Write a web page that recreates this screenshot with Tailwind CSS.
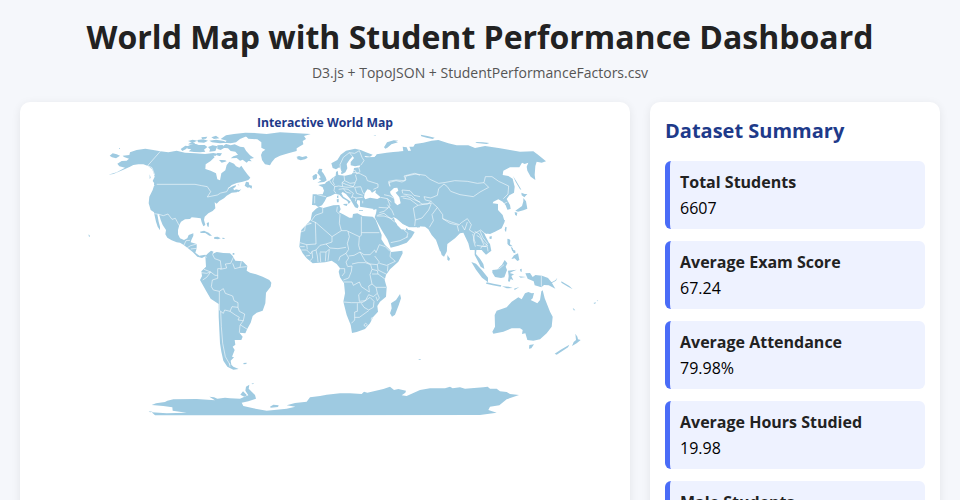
<!DOCTYPE html>
<html lang="en">
<head>
<meta charset="utf-8">
<meta name="viewport" content="width=device-width, initial-scale=1">
<title>World Map with Student Performance Dashboard</title>
<script src="https://cdn.jsdelivr.net/npm/@tailwindcss/browser@4"></script>
</head>
<body class="bg-[#f5f7fb] p-5 font-['Open_Sans',sans-serif] text-black">
<header class="mb-5 text-center">
  <h1 class="text-[32px] leading-[34px] font-bold text-[#222]">World Map with Student Performance Dashboard</h1>
  <p class="mt-[10px] text-sm leading-[18px] text-[#555]">D3.js + TopoJSON + StudentPerformanceFactors.csv</p>
</header>
<main class="flex items-stretch gap-5">
  <section class="min-w-0 flex-1 rounded-[10px] bg-white p-[15px] shadow-[0_2px_10px_rgba(0,0,0,0.08)]">
    <svg class="block w-full overflow-visible" viewBox="0 0 950 688" role="img" aria-label="Interactive World Map">
      <text x="475" y="17" text-anchor="middle" class="fill-[#1e3a8a] text-[20px] font-bold">Interactive World Map</text>
      <g transform="scale(1.638) translate(-35 -117)">
      <g fill="#9ecae1">
        <!-- North America -->
        <g transform="translate(80 125) scale(.33333)">
          <path d="M196 71L215 74 241 79 265 82 290 77 315 83 345 85 375 87 400 84 412 86 405 95 392 108 377 118 376 132 392 137 408 145 412 163 420 166 424 145 436 136 440 120 448 110 462 116 468 124 478 128 484 122 492 134 502 148 511 158 505 165 488 170 470 174 455 180 442 192 458 184 468 180 465 192 480 196 470 202 455 203 440 212 432 220 418 228 410 236 404 232 406 250 398 258 385 265 374 275 372 285 376 300 370 304 365 292 362 280 350 278 335 277 330 282 315 283 303 290 298 300 294 315 294 328 300 340 312 345 322 340 326 330 340 325 340 332 334 345 332 352 350 357 350 370 346 383 358 392 376 389 382 396 376 394 366 399 352 395 338 381 324 370 310 359 300 353 290 352 275 346 262 338 256 328 258 315 248 300 242 285 237 268 232 268 236 290 240 305 240 316 233 305 228 290 223 268 222 262 212 255 206 235 208 215 218 195 222 182 227 180 218 168 224 155 220 142 216 132 204 123 190 118 175 118 160 120 150 125 130 134 100 147 85 149 110 142 128 132 135 128 118 124 112 116 125 108 140 107 147 101 132 96 128 92 148 90 150 82 170 75Z"/>
          <path d="M89 92L98 85 110 88 120 92 108 100 96 97ZM117 69h3v2h-3ZM222 173l10 8-2 6-8-7ZM209 148l3 10-3 4ZM494 182l4-12 8 2 2 8 8 2-1 9-7-4-5 1ZM360 320l12-3 14 6 10 9-8 0-12-8-14 0ZM403 336l10-1 9 5-8 3-12-2ZM427 338l7 1-1 3-6-1ZM380 294l7-2-1 14-4-2ZM26 328l4 5-2 3-2-3ZM473 178l9 4-8-1ZM470 197l14-4-8 8Z"/>
        </g>
        <!-- Greenland, Arctic islands and Iceland -->
        <g transform="translate(180 125) scale(.33333)">
          <path d="M195 31L220 24 260 27 300 22 340 24 392 27 372 33 378 42 368 48 370 58 350 70 350 78 325 85 300 92 285 100 275 112 270 121 255 118 246 105 243 90 247 80 256 74 244 68 244 52 232 43 205 41Z"/>
          <path d="M130 62l8-5 14 4 12-3 16 7 12 2 6 10 12 14 12 8-13 3 6 7-10-1-5 5-12-9-8 3-10-8-18 1 8-6 14-5-8-9-14-2-8-8-14-2ZM122 42l16-11 24-4 34-4 32 1-12 8-20 3-16 7-12 10-16 3-18-2 6-6ZM24 63l18-8 14 5 18 0 8 6-10 8 4 6-16 2-18-1-16-2 8-6-12-2ZM2 72l14-10 11 2-10 9-10 5ZM84 66l14-5 14 3-6 14-18 2 2-7ZM112 84l14 1-6 9-12-4ZM88 47l20-3 24 4 8 5-20 2-24-3ZM52 45l18-2 14 4-12 6-18-1ZM24 48l14-4 14 3-14 6ZM94 37l14-5 10 8-16 2ZM112 61l16-1 4 9-10 6-10-3ZM117 105l14-4 9 8-15 4ZM24 58l10-6 12 2-6 6ZM64 37l18-2-4 6-12 1Z"/>
          <path d="M349 96l8-3 10 3 12-3 4 5-8 5-13 3-11-4 2-3ZM398 154l8-7 6 4-4 11-9 2Z"/>
        </g>
        <!-- South America -->
        <g transform="translate(180 240) scale(.33333)">
          <path d="M76 48L84 40 93 32 101 35 98 41 110 36 130 39 150 40 158 48 166 62 188 64 202 78 200 92 210 98 228 103 248 110 268 120 274 128 272 140 258 158 256 190 248 212 230 218 218 228 212 248 202 266 196 280 178 278 188 290 184 300 164 300 166 314 158 320 164 330 156 350 162 352 152 362 154 374 160 380 176 387 160 389 142 380 130 362 124 335 120 310 118 270 116 230 116 192 92 176 78 152 60 120 66 108 64 94 78 80Z"/>
          <path d="M190 369l10-1-1 4-8 1ZM158 39h5v5h-5Z"/>
        </g>
        <!-- Europe -->
        <g transform="translate(290 140) scale(.33333)">
          <path d="M124 70L142 60 152 44 168 32 195 26 212 30 228 37 248 44 240 50 225 48 222 53 235 60 248 58 256 48 270 46 285 44 310 38 340 34 390 30V205L262 205 262 197 250 201 235 200 220 195 216 184 224 179 212 182 202 180 200 188 206 198 203 205 195 202 188 190 180 176 168 162 158 156 154 160 160 170 174 179 182 185 176 192 172 183 158 175 148 164 135 161 122 168 110 172 104 184 96 196 84 201 77 196 66 195 67 180 68 163 98 163 102 152 98 142 85 135 105 131 108 127 120 120 128 113 137 107 138 96 143 92 145 105 165 107 185 103 190 95 192 84 208 82 212 76 195 79 182 76 182 66 192 54 188 49 178 60 170 72 172 85 166 97 158 101 153 91 148 82 138 88 128 84Z"/>
          <path d="M87 86l10 1-2 7 6 7 6 11 3 9-8 5-20 2 12-7-8-4 6-5-5-8-5-5ZM68 108l12-6 1 13-12 5ZM141 168l4-2v9l-4-2ZM140 178l6-1v10h-5ZM160 192l13-1-3 7-9-3ZM207 211h12v2h-12ZM248 208l9-2-5 4ZM282 22l14-14 22-3 6 2-20 6-12 10-6 3ZM154 96l4 0 0 6-5-1Z"/>
        </g>
        <!-- Africa and Arabia -->
        <g transform="translate(290 200) scale(.33333)">
          <path d="M66 38L78 26 88 20 100 24 130 16 148 15 152 28 147 37 162 44 178 53 187 53 189 42 202 40 218 48 248 50 256 58 262 72 268 88 275 105 274 118 285 135 298 148 304 156 337 152 338 160 325 185 300 208 288 225 284 240 290 262 288 290 270 305 262 318 264 335 250 350 240 370 225 387 200 396 186 399 182 375 170 345 160 305 165 280 162 250 150 232 146 215 150 205 140 192 125 182 105 187 85 188 68 190 50 175 38 160 28 140 30 120 32 100 34 90 48 75 62 60Z"/>
          <path d="M262 18L258 40 254 52 263 68 275 90 292 118 302 143 325 137 350 128 365 112 374 96 360 90 350 82 347 90 335 88 325 76 315 65 312 52 325 62 338 76 355 83 372 84 390 82V0H262ZM330 282L333 295 326 316 315 344 306 350 300 340 305 325 303 310 318 300Z"/>
        </g>
        <!-- Asia -->
        <g transform="translate(360 130) scale(.33333)">
          <path d="M0 76L20 82 45 81 50 73 80 68 100 66 130 64 128 50 140 52 150 76 158 74 152 60 148 50 160 50 165 42 190 38 215 32 235 30 265 40 290 46 325 46 345 54 375 48 420 55 450 60 480 65 520 64 535 75 558 94 545 98 530 95 526 108 524 135 526 150 512 140 502 122 500 110 505 98 494 102 486 98 478 112 450 112 430 122 428 135 445 138 458 146 464 170 462 188 448 196 440 207 450 225 452 237 442 239 437 226 428 215 415 208 400 215 398 220 414 222 414 240 428 255 434 275 425 295 405 305 390 312 372 310 385 335 380 360 330 360 325 340 310 308 300 310 285 325 262 342 260 364 240 364 228 330 215 315 205 298 195 290 165 288 145 290 128 282 112 268 102 262 60 240 0 230Z"/>
          <path d="M73 50l8-13 20-6 14 1-18 7-12 9-6 6ZM182 14l20 4 22 5-6 4-18-4-16-4ZM346 36l22 1 20 2-8 3-30-3ZM40 16l8-1-2 2ZM459 138l10 16 15 25-4-1-14-24ZM484 188l10 4 8 0-9 10-8-6ZM490 204l8 10 4 22-12 5-16 4-8-3 20-14 4-14ZM464 246l8 2-2 10-5-4ZM436 290l4 2-2 15-4-7ZM388 320l7-2 0 8-6 1ZM444 326l7 5-2 18-6-8ZM376 312l5-3v3Z"/>
        </g>
        <!-- South-East Asia and Oceania -->
        <g transform="translate(440 220) scale(.33333)">
          <path d="M54 14L50 30 40 42 20 65 20 95 12 110 5 105-8 60-22 40-30 0ZM66 0L76 30 80 45 88 68 100 62 104 85 104 105 112 120 122 140 133 147 130 132 120 116 108 102 110 82 122 86 130 96 138 104 154 92 150 72 135 55 132 40 152 35 178 27 195 0ZM22 105l8 11-3 7-5-4ZM94 126l14 5 18 20 18 22 0 14-18-14-18-24ZM140 187l20 4 24 5-2 4-24-4-20-5ZM157 150l15-2 14-14 8-14 8 10-5 10 4 10-8 22-10 2-18-3-8-13ZM204 152l26-3-14 6-7 4 13 4-8 5 6 13-8-4-3 8-5-1 2-16ZM202 56l8 3 0 14 8 6-8 0-7-6ZM222 106l12-6 4 20-6 3-8-8-10 2ZM186 199l20 1 12 4-18 1ZM222 206l16-5-14 9ZM240 148l5-2 0 10-4-2ZM236 169l22 2-16 2ZM256 160l14-1 8 12 8-6 20 2 18 7 10 12 12 20-20-10-14-1-8 7-20-6-3-12-18-8ZM332 188l14-7 6-8-4 9-14 8ZM364 184l10 6 14 8 10 10-14-8-20-12ZM212 80l6 4 3 8-4 2ZM218 88l8 4 0 8-6-2ZM398 263l8 8-5 0ZM415 234l3 8ZM460 249l8-2-3 5ZM470 242l5-2-3 4Z"/>
          <path d="M265 216L275 220 282 219 278 235 272 240 292 250 300 240 304 214 308 211 314 235 320 250 330 275 338 290 335 320 320 340 300 358 280 362 262 360 256 340 246 342 248 330 240 325 215 325 190 335 160 341 157 335 165 320 164 285 170 272 200 262 215 245 235 232 245 238 255 220ZM268 375l14-2-8 12-7 1ZM406 341l6 9 2 8 8 2-12 10-14 8 5-12 7-6ZM388 374l-4 8-18 12-16 10-6-3 18-12Z"/>
        </g>
        <!-- Antarctica -->
        <g transform="translate(140 370) scale(.33333)">
          <path d="M48 100L75 96 82 92 100 88 170 87 225 91 208 80 222 82 232 86 255 83 270 85 300 86 310 82 325 76 316 62 318 50 328 44 326 56 345 75 348 86 325 94 305 98 310 108 340 115 380 122 440 116 466 110 440 106 465 99 500 95 510 82 540 78 560 74 600 70 630 70 665 72 672 65 682 68 730 57 750 50 762 60 775 57 798 62 796 68 785 76 800 78 840 60 870 55 915 55 930 50 938 55 960 52 975 56 1030 52 1043 50 1050 56 1070 56 1080 64 1100 66 1110 72 1137 75 1100 88 1078 106 1050 110 1045 120 1070 128 1020 135 45 136 35 127 80 130 140 128 98 122 97 112 70 108 35 105Z"/>
          <path d="M334 41l8-2-3 4ZM301 74l8-10 12 12-8 4ZM390 110l10-6 16 2-2 5-22 2ZM836-32h6v2h-6ZM26 124l12 1-8 2Z"/>
        </g>
      </g>
      <!-- Inland seas -->
      <g fill="#fff">
        <path transform="translate(290 140) scale(.33333)" d="M222 172L224 160 232 148 240 150 246 158 258 150 256 158 272 172 262 177 240 173 226 178ZM300 155L312 144 322 143 325 152 317 158 328 172 332 190 322 196 314 188 312 174 302 162ZM312 232L320 236 338 252 358 262 380 262 385 268 355 270 350 264 334 268 322 256Z"/>
        <path transform="translate(180 125) scale(.33333)" d="M100 92L128 94 142 98 138 106 112 104ZM160 190l14-8 16-6 2 8-18 6-12 6Z"/>
      </g>
      <!-- Borders -->
      <g fill="none" stroke="#fff" stroke-width="1.7" stroke-linejoin="round">
        <path transform="translate(80 125) scale(.33333)" d="M241 79L203 122 216 128 224 150M230 178H345L365 182 382 185 392 200 382 216 412 210 422 204 440 200 448 186M223 266L237 268 250 272 264 267 276 283 286 280 298 302M312 360L318 347 330 346M322 368L332 362 350 357M332 372L350 370"/>
        <path transform="translate(180 240) scale(.33333)" d="M76 48l4 4M101 35L98 44 104 56 121 62 124 86 113 86 113 115 97 120 94 140 100 150 118 154 118 210 122 214 124 260 128 310 136 350 150 374M121 88L140 84 136 72 152 70 160 52M158 70L164 86 180 82 184 64M180 82L200 80M64 98L80 100 92 96 72 88M68 120L80 112 92 96 105 106 113 106M118 154L130 146 136 160 158 168 162 182 174 188 174 202 156 200 150 214 134 210 130 220 122 214M150 214L166 225 178 232 174 240 190 242 194 222 178 214 174 202M190 242L180 256 178 278M180 254L202 268M148 370L150 380"/>
        <path transform="translate(290 140) scale(.33333)" d="M152 90L150 74 160 52 178 38 194 40 208 32 216 52 222 62 212 76M178 38L188 50M206 82L210 95 200 102 196 92 186 90M186 98L200 98 212 102 228 110 232 122 264 132 264 142 250 148M162 106L164 122 180 130 195 128 200 118 196 104M196 128L190 140 170 134 156 128 164 122M118 120L124 130 134 140 132 152 138 160M132 112L128 124 134 136M134 140L146 138 158 140 156 128M158 140L176 142 192 140M146 148L160 146 174 148 190 160 184 174M160 146L168 156 182 160M194 142L212 140 218 156 222 162M194 142L200 160 218 166M186 170L198 174 218 172M198 174L196 184M80 163L98 168 108 170M74 168L74 190M218 182L218 190M272 172L292 176 300 196 294 204 266 202M282 164L300 168 314 176M292 176L304 186M300 140L296 128 318 122 336 126 348 120 342 108 374 100 390 106M338 160L336 150 360 152 372 166 390 170M332 170L350 168 370 178 390 186M292 194L306 212 312 226M268 218L282 214 294 204M260 228L282 228 306 236 312 232"/>
        <path transform="translate(290 200) scale(.33333)" d="M98 24L98 38 76 46 64 62 78 68 126 110 154 92 170 92 174 94 208 110M48 68L64 70 46 76 44 92 32 96M76 66L78 132 50 134 30 128M154 92L148 70 150 44 140 34 142 20M214 50V98H268M214 98V106L208 110 206 136 210 150M174 94L178 110 172 130 176 148 168 160 176 174 168 186 172 198M126 110L126 126 108 132 120 144 144 146 168 142M108 132L90 136 78 150 66 154 62 162 50 150 34 150M50 134L52 148M78 150L82 168 84 186M66 154L68 174 60 182M90 158L92 186M90 156L108 156 106 184M108 156L118 148 114 182M146 182L150 170 168 160M30 140H44M48 168L60 166M176 168L192 166 210 156 222 164 240 164 254 150 258 158 268 134 286 140 300 154M210 156L226 184 240 192 262 194 268 186 254 168M262 194L264 210 292 224M268 190L290 196 316 184 300 170 302 154M294 196L292 214M150 206L164 206 164 218 156 228M172 200L186 198 184 214 176 234 160 240M186 192L204 188 226 188 242 194 246 208 240 224 246 252 236 258 238 276 214 260 208 246 190 256 186 246 160 246M246 222H264L286 238M246 208L262 212 264 222M246 252L258 262 288 262M258 262L262 280 250 290 236 284 226 302 208 304 206 284 214 276M160 306L184 308 216 308 226 302 240 292 252 304 250 322 236 330 222 322 214 310M202 310L202 334 194 336 194 360 184 370M194 352L208 352 222 342 236 332M262 280L268 294 262 302 258 290M222 374l5-4 5 4-4 5-5-1ZM246 352l4 4-3 6-4-4ZM302 128L330 122 354 110M262 46L282 40 314 66M342 90L354 100 350 112"/>
        <path transform="translate(360 130) scale(.33333)" d="M90 168L86 154 108 150 134 152 138 138 168 132 196 136 210 148 236 160 252 158 284 152 322 154 352 160 372 158 386 172 360 186 340 200 300 194 272 184 262 170 252 162M372 158L376 140 396 140 416 154 446 168 444 192 430 206M252 162L236 176 232 196 212 204 192 200 196 210 214 214 202 222 186 222 166 208 154 196 130 192M128 204L150 208 174 226 160 234 166 270 164 288M174 226L196 222 214 220 206 240 186 264 166 270M214 216L232 232 216 254 220 272 208 292M232 232L248 254 248 266 274 276 298 284 304 278 322 266 334 284 328 300 344 310 362 300 376 312M248 266L270 280 296 286M292 288L296 304M306 286L314 300 322 276M344 310L340 330 346 350M350 316L362 324 372 346M360 302L368 322 382 340 376 350 350 346M430 222L442 216"/>
        <path transform="translate(440 220) scale(.33333)" d="M304 168V200M160 148L178 146 192 134M122 86L126 78 142 80 144 94M104 34L118 42 130 66 144 78M98 42L106 70M112 100l8 6"/>
      </g>
      </g>
    </svg>
  </section>
  <aside class="w-[290px] shrink-0 rounded-[10px] bg-white p-[15px] shadow-[0_2px_10px_rgba(0,0,0,0.08)]">
    <h2 class="mb-4 text-xl leading-7 font-bold text-[#1e3a8a]">Dataset Summary</h2>
    <dl class="flex flex-col gap-3">
      <div class="rounded-md border-l-[5px] border-[#4a6cf7] bg-[#eef2ff] p-[10px]">
        <dt class="mb-1 leading-[22px] font-bold text-[#222]">Total Students</dt>
        <dd class="leading-[22px]">6607</dd>
      </div>
      <div class="rounded-md border-l-[5px] border-[#4a6cf7] bg-[#eef2ff] p-[10px]">
        <dt class="mb-1 leading-[22px] font-bold text-[#222]">Average Exam Score</dt>
        <dd class="leading-[22px]">67.24</dd>
      </div>
      <div class="rounded-md border-l-[5px] border-[#4a6cf7] bg-[#eef2ff] p-[10px]">
        <dt class="mb-1 leading-[22px] font-bold text-[#222]">Average Attendance</dt>
        <dd class="leading-[22px]">79.98%</dd>
      </div>
      <div class="rounded-md border-l-[5px] border-[#4a6cf7] bg-[#eef2ff] p-[10px]">
        <dt class="mb-1 leading-[22px] font-bold text-[#222]">Average Hours Studied</dt>
        <dd class="leading-[22px]">19.98</dd>
      </div>
      <div class="rounded-md border-l-[5px] border-[#4a6cf7] bg-[#eef2ff] p-[10px]">
        <dt class="mb-1 leading-[22px] font-bold text-[#222]">Male Students</dt>
        <dd class="leading-[22px]">3814</dd>
      </div>
    </dl>
  </aside>
</main>
</body>
</html>
